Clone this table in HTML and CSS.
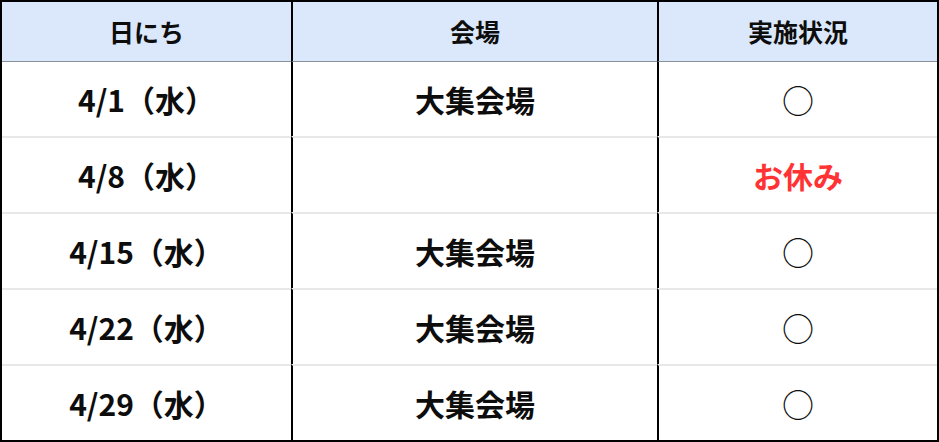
FILE: index.html
```html
<!DOCTYPE html>
<html lang="ja">
<head>
<meta charset="utf-8">
<link rel="stylesheet" href="styles.css">
</head>
<body>
<table class="schedule">
  <colgroup>
    <col class="c-date">
    <col class="c-place">
    <col class="c-status">
  </colgroup>
  <thead>
    <tr>
      <th>日にち</th>
      <th>会場</th>
      <th>実施状況</th>
    </tr>
  </thead>
  <tbody>
    <tr><td>4/1（水）</td><td>大集会場</td><td class="mark">○</td></tr>
    <tr><td>4/8（水）</td><td></td><td class="off">お休み</td></tr>
    <tr><td>4/15（水）</td><td>大集会場</td><td class="mark">○</td></tr>
    <tr><td>4/22（水）</td><td>大集会場</td><td class="mark">○</td></tr>
    <tr><td>4/29（水）</td><td>大集会場</td><td class="mark">○</td></tr>
  </tbody>
</table>
</body>
</html>
```
FILE: styles.css
```css
html, body {
  margin: 0;
  padding: 0;
  background: #fff;
}
.schedule {
  border-collapse: separate;
  border-spacing: 0;
  border: 2px solid #000;
  width: 939px;
  table-layout: fixed;
  font-family: "Noto Sans CJK JP", "Noto Sans", sans-serif;
  font-weight: 700;
  color: #0d0d0d;
}
.c-date { width: 289px; }
.c-place { width: 366px; }
.c-status { width: 280px; }
.schedule th,
.schedule td {
  padding: 0;
  text-align: center;
  vertical-align: middle;
}
.schedule th + th,
.schedule td + td {
  border-left: 2px solid #000;
}
.schedule th {
  height: 59px;
  background: #dbe8fb;
  font-size: 25px;
  border-bottom: 1px solid #8a9099;
  line-height: 1;
}
.schedule td {
  height: 74px;
  font-size: 30px;
  line-height: 1;
}
.schedule tbody tr + tr td {
  border-top: 2px solid #e8e8e8;
}
.schedule .mark {
  font-weight: 400;
  font-size: 32px;
}
.schedule .off {
  color: #ff3333;
}
```
